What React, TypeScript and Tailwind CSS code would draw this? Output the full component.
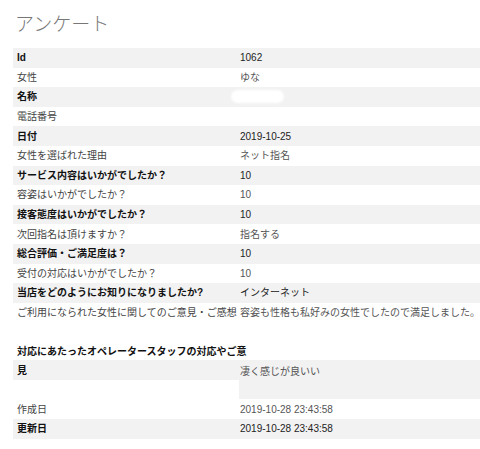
const font = { fontFamily: '"Liberation Sans", "Noto Sans CJK JP", sans-serif' };

type Row = { label: string; value: string; redacted?: boolean };

const rows: Row[] = [
  { label: 'Id', value: '1062' },
  { label: '女性', value: 'ゆな' },
  { label: '名称', value: '', redacted: true },
  { label: '電話番号', value: '' },
  { label: '日付', value: '2019-10-25' },
  { label: '女性を選ばれた理由', value: 'ネット指名' },
  { label: 'サービス内容はいかがでしたか？', value: '10' },
  { label: '容姿はいかがでしたか？', value: '10' },
  { label: '接客態度はいかがでしたか？', value: '10' },
  { label: '次回指名は頂けますか？', value: '指名する' },
  { label: '総合評価・ご満足度は？', value: '10' },
  { label: '受付の対応はいかがでしたか？', value: '10' },
  { label: '当店をどのようにお知りになりましたか?', value: 'インターネット' },
  { label: 'ご利用になられた女性に関してのご意見・ご感想', value: '容姿も性格も私好みの女性でしたので満足しました。' },
];

const InfoRow = ({ row, shaded }: { row: Row; shaded: boolean }) => (
  <div className={`flex h-[19.6px] items-center whitespace-nowrap ${shaded ? 'bg-[#f2f2f2]' : 'bg-white'}`}>
    <div className={`w-[226px] shrink-0 pl-[4px] ${shaded ? 'font-bold text-[#111]' : 'text-[#444]'}`}>
      {row.label}
    </div>
    <div className={`pl-[1px] ${shaded ? 'text-[#222]' : 'text-[#555]'}`}>
      {row.redacted ? (
        <div className="ml-[-9px] h-[13px] w-[53px] rounded-full bg-white blur-[1px]" />
      ) : (
        row.value
      )}
    </div>
  </div>
);

export default function App() {
  return (
    <div className="h-[449px] w-[480px] overflow-hidden bg-white text-[10px]" style={font}>
      <h1 className="ml-[15px] pt-[12px] text-[19px] font-light leading-[26px] text-[#777]">アンケート</h1>

      <div className="ml-[13px] mt-[10px]">
        {rows.map((row, i) => (
          <InfoRow key={row.label} row={row} shaded={i % 2 === 0} />
        ))}

        {/* operator feedback, label wraps above its row */}
        <div className="mt-[20px] flex h-[18px] items-center pl-[4px] font-bold text-[#111] whitespace-nowrap">
          対応にあたったオペレータースタッフの対応やご意
        </div>
        <div className="flex items-start">
          <div className="flex h-[20px] w-[226px] shrink-0 items-center bg-[#f2f2f2] pl-[4px] font-bold text-[#111]">
            見
          </div>
          <div className="h-[39px] flex-1 bg-[#f2f2f2] pl-[1px] pt-[4px] text-[#555]">凄く感じが良いい</div>
        </div>
        <InfoRow row={{ label: '作成日', value: '2019-10-28 23:43:58' }} shaded={false} />
        <InfoRow row={{ label: '更新日', value: '2019-10-28 23:43:58' }} shaded={true} />
      </div>
    </div>
  );
}
